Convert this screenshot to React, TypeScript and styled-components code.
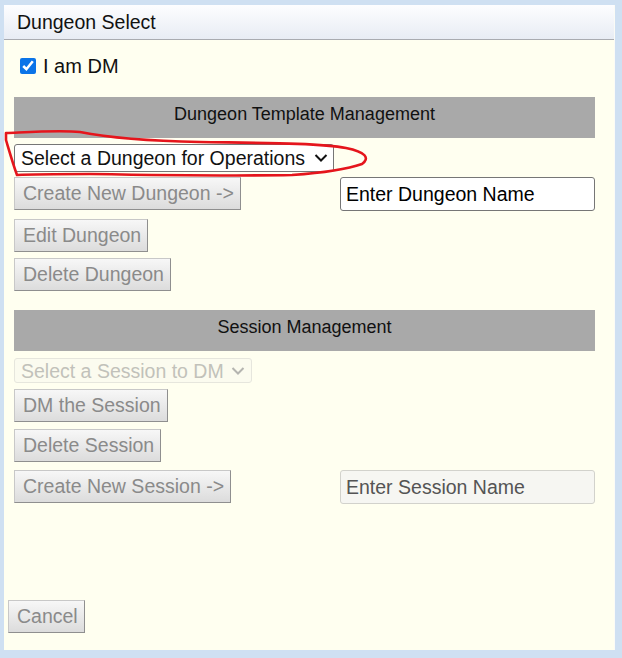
import React from "react";
import styled, { createGlobalStyle } from "styled-components";

const GlobalStyle = createGlobalStyle`
  html, body {
    margin: 0;
    padding: 0;
    background: #cfe0f2;
    font-family: "Liberation Sans", Arial, sans-serif;
  }
`;

const Window = styled.div`
  margin: 5px 7px 0 4px;
  height: 645px;
  display: flex;
  flex-direction: column;
  background: #fffff0;
  border-right: 1px solid #fbfbf6;
  box-sizing: border-box;
`;

const TitleBar = styled.div`
  height: 35px;
  line-height: 34px;
  padding-left: 13px;
  font-size: 19.5px;
  color: #111;
  background: linear-gradient(#fdfdff, #e8ecf4);
  border-bottom: 1px solid #a9abb0;
  box-sizing: border-box;
`;

const Body = styled.div`
  position: relative;
  flex: 1;
  display: flex;
  flex-direction: column;
  padding: 0 19px 0 10px;
`;

const CheckRow = styled.label`
  display: flex;
  align-items: center;
  gap: 7px;
  margin-top: 15px;
  height: 22px;
  font-size: 20px;
  color: #111;
  padding-left: 6px;
`;

const CheckBox = styled.input`
  width: 16px;
  height: 16px;
  margin: 0;
  accent-color: #0b74e8;
`;

const SectionHeader = styled.div<{ $top: number }>`
  margin-top: ${(p) => p.$top}px;
  height: 41px;
  line-height: 34px;
  text-align: center;
  background: #a9a9a9;
  font-size: 18px;
  color: #111;
`;

const SelectWrap = styled.span<{ $top: number; $disabled?: boolean }>`
  position: relative;
  align-self: flex-start;
  display: inline-flex;
  margin-top: ${(p) => p.$top}px;
  color: ${(p) => (p.$disabled ? "#b4b4b0" : "#111")};
`;

const Select = styled.select<{ $h: number; $pr: number }>`
  appearance: none;
  font-family: "Liberation Sans", Arial, sans-serif;
  font-size: 19.5px;
  height: ${(p) => p.$h}px;
  padding: 0 ${(p) => p.$pr}px 0 6px;
  border-radius: 3px;
  border: 1px solid #767676;
  background: #fff;
  color: #111;
  &:disabled {
    border-color: #dcdcd6;
    background: rgba(239, 239, 239, 0.3);
    color: #a8a8a4;
  }
`;

const Chevron = styled.svg<{ $right: number }>`
  position: absolute;
  right: ${(p) => p.$right}px;
  top: 50%;
  transform: translateY(-50%);
  pointer-events: none;
`;

const Row = styled.div<{ $top: number }>`
  display: flex;
  justify-content: space-between;
  align-items: center;
  margin-top: ${(p) => p.$top}px;
`;

const Button = styled.button<{ $top?: number }>`
  align-self: flex-start;
  margin-top: ${(p) => p.$top ?? 0}px;
  height: 33px;
  padding: 0 6px 0 8px;
  font-family: "Liberation Sans", Arial, sans-serif;
  font-size: 19.5px;
  color: #8a8a8a;
  background: linear-gradient(#f7f7f7, #dcdcdc);
  border: 1px solid;
  border-color: #c8c8c8 #8f8f8f #8f8f8f #c8c8c8;
  border-radius: 0;
`;

const TextInput = styled.input`
  width: 255px;
  height: 34px;
  box-sizing: border-box;
  padding: 0 5px;
  font-family: "Liberation Sans", Arial, sans-serif;
  font-size: 19.5px;
  color: #000;
  border: 1px solid #767676;
  border-radius: 3px;
  background: #fff;
  &:disabled {
    color: #545454;
    border-color: #d2d2cc;
    background: #f6f6f2;
  }
`;

const Footer = styled.div`
  padding: 0 0 17px 4px;
`;

const Scribble = styled.svg`
  position: absolute;
  left: -4px;
  top: 0;
  pointer-events: none;
`;

function Arrow({ right }: { right: number }) {
  return (
    <Chevron $right={right} width="14" height="9" viewBox="0 0 14 9">
      <path d="M1.5 1.5 L7 7 L12.5 1.5" fill="none" stroke="currentColor" strokeWidth="2" />
    </Chevron>
  );
}

export default function App() {
  return (
    <>
      <GlobalStyle />
      <Window>
        <TitleBar>Dungeon Select</TitleBar>
        <Body>
          <CheckRow>
            <CheckBox type="checkbox" defaultChecked />I am DM
          </CheckRow>
          <SectionHeader $top={20}>Dungeon Template Management</SectionHeader>
          <SelectWrap $top={6}>
            <Select $h={28} $pr={27} defaultValue="">
              <option value="">Select a Dungeon for Operations</option>
            </Select>
            <Arrow right={6} />
          </SelectWrap>
          <Row $top={5}>
            <Button disabled>Create New Dungeon -&gt;</Button>
            <TextInput defaultValue="Enter Dungeon Name" />
          </Row>
          <Button $top={8}>Edit Dungeon</Button>
          <Button $top={6}>Delete Dungeon</Button>
          <SectionHeader $top={19}>Session Management</SectionHeader>
          <SelectWrap $top={7} $disabled>
            <Select $h={25} $pr={27} disabled defaultValue="">
              <option value="">Select a Session to DM</option>
            </Select>
            <Arrow right={7} />
          </SelectWrap>
          <Button $top={6}>DM the Session</Button>
          <Button $top={7}>Delete Session</Button>
          <Row $top={8}>
            <Button>Create New Session -&gt;</Button>
            <TextInput disabled defaultValue="Enter Session Name" />
          </Row>
          <Scribble width="380" height="150" viewBox="0 0 380 150">
            <path
              d="M6 93 C30 92 60 90 80 92 C110 98 150 101 200 102 C260 103 320 103 346 108 C366 112 370 118 362 124 C345 130 320 133 292 135 C240 136 150 135 90 134 C60 134 35 134 17 135 C13 124 9 110 6 100 Z"
              fill="none"
              stroke="#e5151c"
              strokeWidth="2.6"
              strokeLinejoin="round"
            />
          </Scribble>
        </Body>
        <Footer>
          <Button>Cancel</Button>
        </Footer>
      </Window>
    </>
  );
}
